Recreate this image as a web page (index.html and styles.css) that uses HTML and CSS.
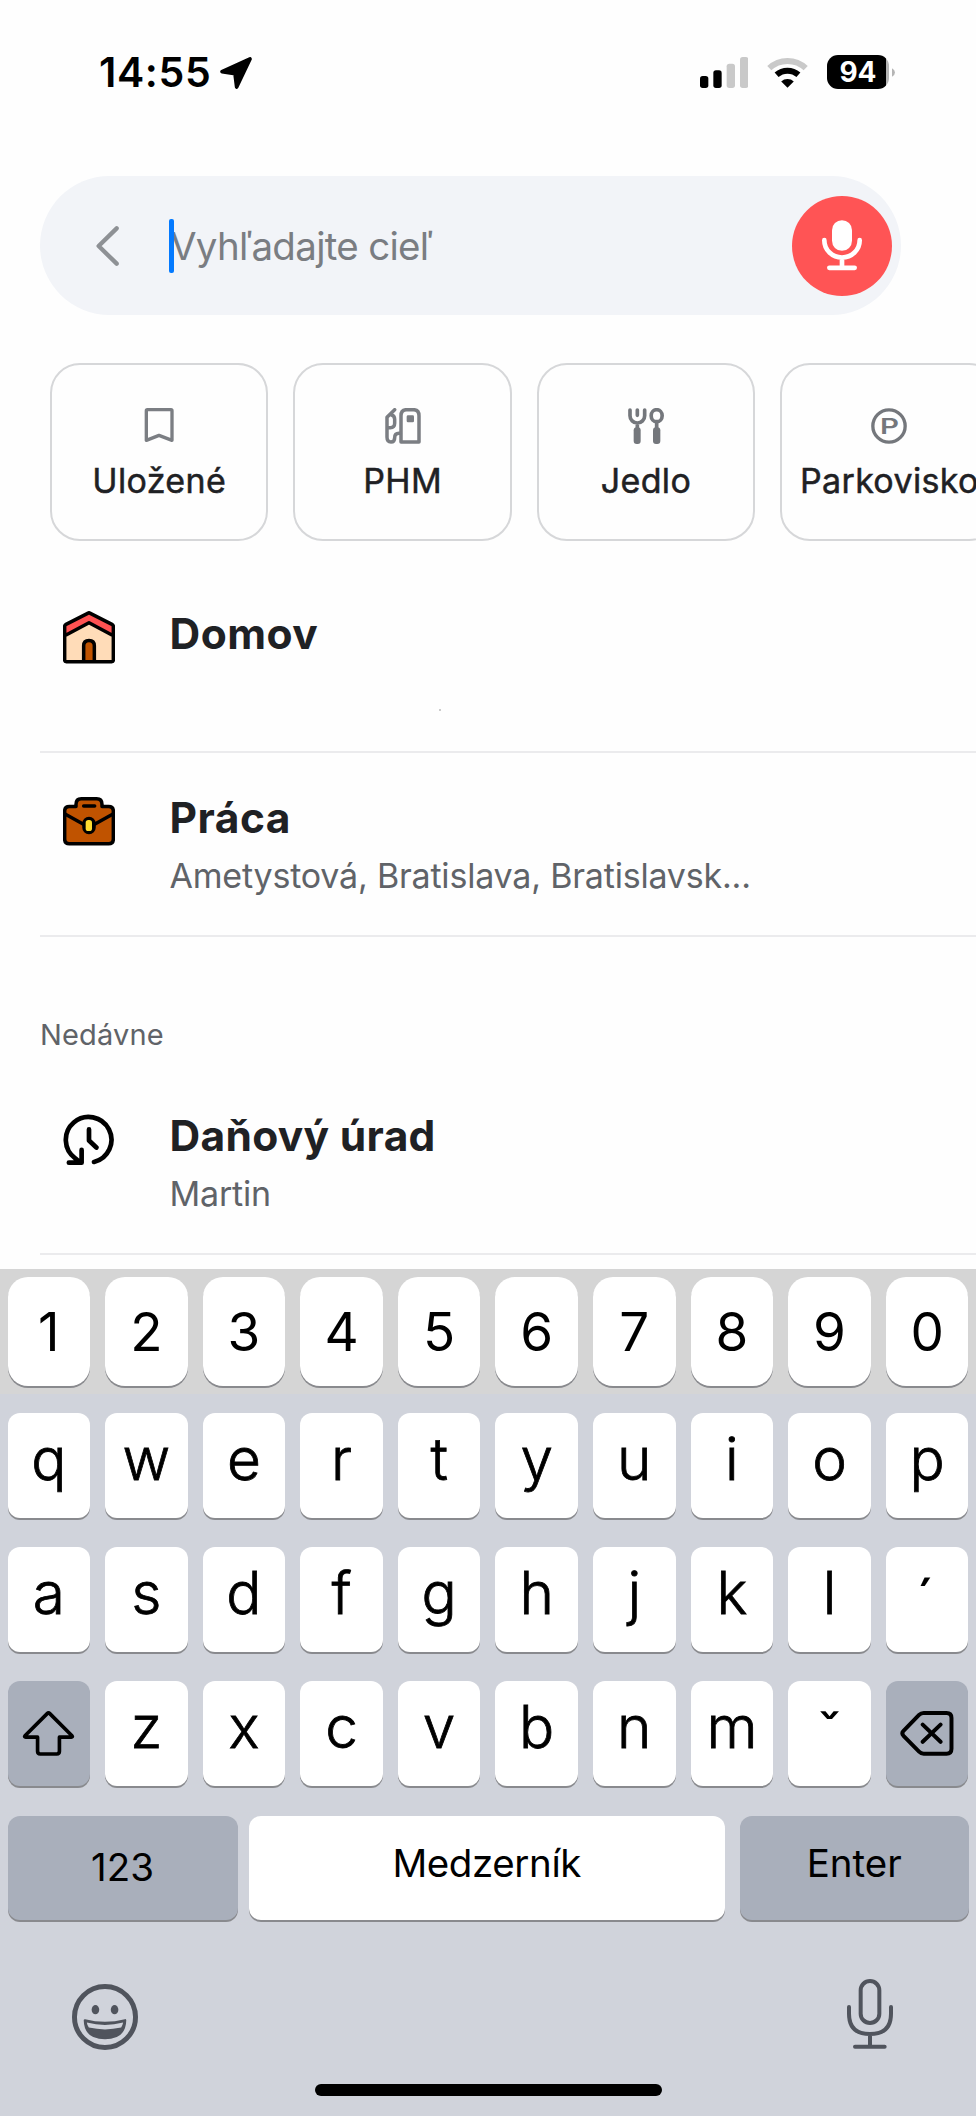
FILE: index.html
```html
<!DOCTYPE html>
<html lang="sk">
<head>
<meta charset="utf-8">
<title>Vyhľadávanie cieľa</title>
<link rel="stylesheet" href="styles.css">
</head>
<body>
<div class="screen">
  <header class="status">
    <span class="time">14:55</span>
    <svg class="loc" viewBox="0 0 96 96"><path d="M90 6 L50 90 L45 50 L6 44 Z" fill="#000" stroke="#000" stroke-width="11" stroke-linejoin="round"/></svg>
    <svg class="signal" viewBox="0 0 144 93">
      <rect x="0" y="57" width="25" height="36" rx="8"/><rect x="40" y="40" width="25" height="53" rx="8"/>
      <rect class="off" x="80" y="20" width="25" height="73" rx="8"/><rect class="off" x="120" y="0" width="25" height="93" rx="8"/>
    </svg>
    <svg class="wifi" viewBox="0 0 124 92">
      <path d="M7 33 A80 80 0 0 1 117 33" fill="none" stroke="#c9c9c9" stroke-width="18"/>
      <path d="M29 53 A50 50 0 0 1 95 53" fill="none" stroke="#000" stroke-width="18"/>
      <path d="M62 92 L43 73 A28 28 0 0 1 81 73 Z"/>
    </svg>
    <div class="battery"><span class="level">94</span><svg class="nub" viewBox="0 0 10 28"><path d="M0 0 Q10 6 10 14 Q10 22 0 28 Z"/></svg></div>
  </header>

  <div class="search">
    <svg class="back" viewBox="0 0 69 120"><path d="M62 7 L8 60 L62 113" fill="none" stroke="#8e9195" stroke-width="13" stroke-linecap="round" stroke-linejoin="round"/></svg>
    <div class="field"><i class="caret"></i><span class="placeholder">Vyhľadajte cieľ</span></div>
    <div class="voice">
      <svg viewBox="0 0 120 152"><rect x="30" y="0" width="60" height="92" rx="30" fill="#fff"/><path d="M7 60 V61 A53 51 0 0 0 113 61 V60 M60 114 V140 M22 143 H98" fill="none" stroke="#fff" stroke-width="14" stroke-linecap="round"/></svg>
    </div>
  </div>

  <nav class="chips">
    <div class="chip">
      <svg class="chip-icon" viewBox="0 0 108 108"><path d="M16 8 Q16 5 19 5 H90 Q93 5 93 8 V97 L54 82 L16 97 Z" fill="none" stroke="#7b7e83" stroke-width="10" stroke-linejoin="round"/></svg>
      <span>Uložené</span>
    </div>
    <div class="chip">
      <svg class="chip-icon" viewBox="0 0 108 108"><g fill="none" stroke="#7b7e83" stroke-width="10.5" stroke-linecap="round" stroke-linejoin="round"><path d="M48 102 V23 Q48 5 65 5 H85 Q102 5 102 23 V102 Z"/><path d="M29 5 L6 28 V88 Q6 102 18 102 Q29 102 29 89 Q29 76 42 76 H46"/><path d="M18 20 Q29 22 29 34 V46 Q29 59 16 59 H8"/></g><rect x="65" y="22" width="22" height="21" rx="4" fill="#7b7e83"/></svg>
      <span>PHM</span>
    </div>
    <div class="chip">
      <svg class="chip-icon" viewBox="0 0 108 108"><g fill="none" stroke="#74777c" stroke-width="11" stroke-linecap="round"><path d="M6 6 V23 A22 22 0 0 0 50 23 V6 M28 6 V22 M28 46 V64"/><ellipse cx="86" cy="23" rx="16.5" ry="18"/><path d="M86 42 V64"/></g><rect x="17" y="58" width="21" height="50" rx="9" fill="#74777c"/><rect x="75" y="58" width="22" height="50" rx="9" fill="#74777c"/></svg>
      <span>Jedlo</span>
    </div>
    <div class="chip">
      <svg class="chip-icon" viewBox="0 0 108 108"><circle cx="54" cy="54" r="48.5" fill="none" stroke="#74777c" stroke-width="10"/><text class="park" x="27" y="78" textLength="57" lengthAdjust="spacingAndGlyphs">P</text></svg>
      <span>Parkovisko</span>
    </div>
  </nav>

  <main class="list">
    <div class="row">
      <svg class="row-icon house" viewBox="0 0 156 157">
        <path d="M5 42 L78 6 L151 42 V147 Q151 152 146 152 H10 Q5 152 5 147 Z" fill="#ffdcb8"/>
        <path d="M5 74 V46 Q5 42 9 40 L74 7 Q78 4 82 7 L147 40 Q151 42 151 46 V74 L78 35 Z" fill="#ff5252"/>
        <path d="M62 150 V104 Q62 88 78 88 Q94 88 94 104 V150 Z" fill="#c05300"/>
        <path d="M5 46 Q5 42 9 40 L74 7 Q78 4 82 7 L147 40 Q151 42 151 46 V147 Q151 152 146 152 H10 Q5 152 5 147 Z M5 74 L78 35 L151 74 M62 150 V104 Q62 88 78 88 Q94 88 94 104 V150" fill="none" stroke="#000" stroke-width="10.5" stroke-linejoin="round"/>
      </svg>
      <div class="texts"><div class="title domov">Domov</div><i class="speck"></i></div>
    </div>
    <div class="row">
      <svg class="row-icon case" viewBox="0 0 156 145">
        <g fill="#c05300" stroke="#000" stroke-width="10.5" stroke-linecap="round" stroke-linejoin="round">
          <path d="M19 28 H39 V22 Q39 5 55 5 H101 Q117 5 117 22 V28 H137 Q151 28 151 42 V126 Q151 140 137 140 H19 Q5 140 5 126 V42 Q5 28 19 28 Z"/>
          <path d="M6 51 L60 81 M150 51 L96 81 M62 27 H95" fill="none"/>
          <rect x="63" y="64" width="30" height="42" rx="15" fill="#000"/>
        </g>
        <rect x="68" y="69" width="19" height="33" rx="8" fill="#ffdc30"/>
      </svg>
      <div class="texts"><div class="title praca">Práca</div><div class="sub addr">Ametystová, Bratislava, Bratislavsk...</div></div>
    </div>
    <h2 class="section">Nedávne</h2>
    <div class="row">
      <svg class="row-icon history" viewBox="0 0 150 152"><g fill="none" stroke="#000" stroke-width="14" stroke-linecap="round" stroke-linejoin="round"><path d="M90 143 A68 68 0 1 0 34 132 L47 143 M53 107 V145 H15 M75 46 V79 L97 100"/></g></svg>
      <div class="texts"><div class="title urad">Daňový úrad</div><div class="sub martin">Martin</div></div>
    </div>
  </main>

  <section class="keyboard">
    <div class="keys digits"><b>1</b><b>2</b><b>3</b><b>4</b><b>5</b><b>6</b><b>7</b><b>8</b><b>9</b><b>0</b></div>
    <div class="keys"><b>q</b><b>w</b><b>e</b><b>r</b><b>t</b><b>y</b><b>u</b><b>i</b><b>o</b><b>p</b></div>
    <div class="keys"><b>a</b><b>s</b><b>d</b><b>f</b><b>g</b><b>h</b><b>j</b><b>k</b><b>l</b><b class="accent acute">´</b></div>
    <div class="keys">
      <b class="dark"><svg class="shift" viewBox="0 0 158 136"><path d="M75 8 Q79 4 83 8 L150 75 Q153 79 148 79 H112 V122 Q112 130 104 130 H54 Q46 130 46 122 V79 H10 Q5 79 8 75 Z" fill="none" stroke="#000" stroke-width="11" stroke-linejoin="round"/></svg></b>
      <b>z</b><b>x</b><b>c</b><b>v</b><b>b</b><b>n</b><b>m</b><b class="accent">ˇ</b>
      <b class="dark"><svg class="erase" viewBox="0 0 162 136"><path d="M10 60 L57 12 Q63 6 71 6 H140 Q155 6 155 21 V114 Q155 129 140 129 H71 Q63 129 57 123 L10 75 Q3 67 10 60 Z M68 41 L122 93 M122 41 L68 93" fill="none" stroke="#000" stroke-width="12" stroke-linecap="round" stroke-linejoin="round"/></svg></b>
    </div>
    <div class="keys bottom"><b class="dark num">123</b><b class="space">Medzerník</b><b class="dark enter">Enter</b></div>
    <div class="tools">
      <svg class="emoji" viewBox="0 0 200 200">
        <circle cx="100" cy="100" r="92.5" fill="none" stroke="#50545d" stroke-width="15"/>
        <ellipse cx="71" cy="78" rx="11.5" ry="14" fill="#50545d"/><ellipse cx="129" cy="78" rx="11.5" ry="14" fill="#50545d"/>
        <path d="M39 110 Q100 126 161 110 Q160 164 100 164 Q40 164 39 110 Z" fill="#50545d" stroke="#50545d" stroke-width="7" stroke-linejoin="round"/>
        <path d="M45 117 Q100 131 155 117 Q153 127 149 132 Q100 143 51 132 Q46 126 45 117 Z" fill="#d0d3db"/>
      </svg>
      <svg class="mic" viewBox="0 0 138 210"><g fill="none" stroke="#50545d" stroke-width="12" stroke-linecap="round"><rect x="41" y="6" width="56" height="126" rx="28"/><path d="M6 84 V104 Q6 165 69 165 Q132 165 132 104 V84 M69 165 V202 M24 203 H113"/></g></svg>
    </div>
    <div class="home"></div>
  </section>
</div>
</body>
</html>
```

FILE: styles.css
```css
* { box-sizing: border-box; }
body { margin: 0; background: #fefefe; font-family: Inter, "Liberation Sans", sans-serif; color: #1f2124; }
.screen { width: 976px; height: 2116px; overflow: hidden; display: flex; flex-direction: column; background: #fefefe; }
svg { display: block; flex: none; }

.status { height: 176px; padding: 0 81px 32px 99px; display: flex; align-items: center; flex: none; }
.time { font-size: 41px; font-weight: 600; color: #000; line-height: 50px; width: 121px; letter-spacing: 0.6px; white-space: nowrap; }
.loc { width: 32px; height: 32px; margin-top: 2px; }
.signal { width: 48px; height: 31px; margin-left: auto; margin-top: 1px; }
.signal .off { fill: #c9c9c9; }
.wifi { width: 41px; height: 31px; margin: 1px 19px 0 19px; }
.battery { display: flex; align-items: center; gap: 3px; }
.level { width: 62px; height: 34px; border-radius: 11px; background: linear-gradient(90deg, #000 59px, #b5b5b5 59px); color: #fff; font-size: 28px; font-weight: 700; line-height: 35px; text-align: center; }
.nub { width: 3px; height: 9px; fill: #b5b5b5; }

.search { width: 861px; height: 139px; flex: none; margin-left: 40px; border-radius: 70px; background: #f2f4f8; display: flex; align-items: center; padding: 0 9px 0 56px; }
.back { width: 23px; height: 40px; }
.field { margin-left: 50px; display: flex; align-items: center; flex: 1; }
.caret { width: 5px; height: 54px; border-radius: 2px; background: #047aff; margin-right: -4px; position: relative; }
.placeholder { font-size: 38.5px; line-height: 48px; letter-spacing: -0.7px; color: #7a7d82; white-space: nowrap; }
.voice { width: 100px; height: 100px; border-radius: 50%; background: #ff5455; display: flex; align-items: center; justify-content: center; }
.voice svg { width: 40px; height: 51px; }

.chips { display: flex; gap: 25px; margin: 48px 0 0 50px; flex: none; }
.chip { width: 218.4px; height: 178px; flex: none; border: 2px solid #d6d7d9; border-radius: 30px; display: flex; flex-direction: column; align-items: center; padding-top: 43px; }
.chip-icon { width: 36px; height: 36px; }
.chip span { font-size: 34px; font-weight: 400; -webkit-text-stroke: 0.5px #1f2124; line-height: 44px; letter-spacing: 0.35px; margin-top: 15px; white-space: nowrap; }
.park { font-family: Inter, sans-serif; font-size: 63px; font-weight: 600; fill: #74777c; }

.list { margin: 28px 0 0 40px; flex: none; height: 700px; }
.row { height: 184px; border-bottom: 2px solid #ebebed; display: flex; padding: 37px 0 0 23px; }
.row-icon { width: 52px; }
.house { height: 52.5px; margin-top: 5px; }
.case { height: 48.5px; margin-top: 7px; }
.history { height: 51px; margin-top: 6px; }
.texts { margin-left: 54.5px; }
.title { font-size: 42.5px; font-weight: 700; line-height: 56px; letter-spacing: 0.3px; white-space: nowrap; }
.domov, .praca { letter-spacing: 0.5px; }
.sub { font-size: 34px; line-height: 46px; margin-top: 7px; letter-spacing: -0.2px; color: #606368; white-space: nowrap; }
.speck { display: block; width: 2px; height: 2px; background: #ccc; margin: 47px 0 0 269px; }
.section { margin: 0; height: 134px; padding-top: 79px; font-size: 29px; line-height: 38px; letter-spacing: 0.15px; font-weight: 400; color: #606368; }

.keyboard { height: 847px; flex: none; background: #d0d3db; }
.keys { display: grid; grid-template-columns: repeat(10, 82.5px); column-gap: 15.1px; padding: 0 7.5px; height: 134.2px; }
.keys b { height: 104.5px; border-radius: 12px; background: #fff; box-shadow: 0 2px 0 #898a8e; color: #000; font-weight: 300; -webkit-text-stroke: 0.8px #000; font-size: 58.5px; display: flex; align-items: center; justify-content: center; padding-bottom: 13px; line-height: 70px; }
.keys .dark { background: #a9afbb; padding-bottom: 0; }
.keys .accent { padding: 3px 0 0; font-weight: 400; -webkit-text-stroke: 0; }
.keys .acute { padding-right: 4px; }
.digits { background: #d5d5d5; height: 125px; padding-top: 8px; margin-bottom: 19px; }
.digits b { height: 109px; border-radius: 20px; font-size: 53px; font-weight: 400; -webkit-text-stroke: 0; padding: 0; }
.shift { width: 53px; height: 45px; }
.erase { width: 54px; height: 45px; }
.bottom { grid-template-columns: 230px 476px 228.5px; column-gap: 0; justify-content: space-between; }
.keys.bottom b { font-size: 38.5px; font-weight: 400; -webkit-text-stroke: 0; line-height: 48px; padding-bottom: 9px; }
.keys.bottom .num { padding-bottom: 2px; }
.keys.bottom .space { margin: 0 2px 0 -2px; letter-spacing: -0.4px; width: 476px; }
.tools { display: flex; justify-content: space-between; padding: 29px 83px 0 72px; height: 133.6px; }
.emoji { width: 66px; height: 66px; margin-top: 5px; }
.mic { width: 46px; height: 70px; }
.home { width: 347px; height: 12px; border-radius: 6px; background: #000; margin: 1px 0 0 315px; }
```
